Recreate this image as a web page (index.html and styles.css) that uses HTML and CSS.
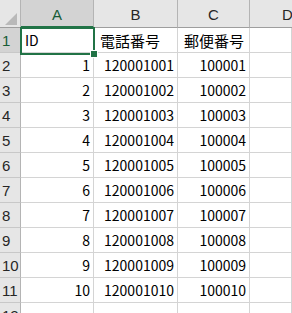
FILE: index.html
```html
<!DOCTYPE html>
<html lang="ja">
<head>
    <meta charset="UTF-8">
    <title>Sheet1</title>
    <link rel="stylesheet" href="styles.css">
</head>
<body>
    <div class="sheet">
        <!-- 列見出し -->
        <div class="corner"><svg width="20" height="27" viewBox="0 0 20 27"><polygon points="17,13 17,25 5,25" fill="#b9b9b9"/></svg></div>
        <div class="col-head sel">A</div>
        <div class="col-head">B</div>
        <div class="col-head">C</div>
        <div class="col-head last">D</div>

        <div class="row-head sel">1</div>
        <div class="cell txt">ID</div>
        <div class="cell txt jp">電話番号</div>
        <div class="cell txt jp">郵便番号</div>
        <div class="cell"></div>

        <div class="row-head">2</div>
        <div class="cell num">1</div>
        <div class="cell num">120001001</div>
        <div class="cell num">100001</div>
        <div class="cell"></div>

        <div class="row-head">3</div>
        <div class="cell num">2</div>
        <div class="cell num">120001002</div>
        <div class="cell num">100002</div>
        <div class="cell"></div>

        <div class="row-head">4</div>
        <div class="cell num">3</div>
        <div class="cell num">120001003</div>
        <div class="cell num">100003</div>
        <div class="cell"></div>

        <div class="row-head">5</div>
        <div class="cell num">4</div>
        <div class="cell num">120001004</div>
        <div class="cell num">100004</div>
        <div class="cell"></div>

        <div class="row-head">6</div>
        <div class="cell num">5</div>
        <div class="cell num">120001005</div>
        <div class="cell num">100005</div>
        <div class="cell"></div>

        <div class="row-head">7</div>
        <div class="cell num">6</div>
        <div class="cell num">120001006</div>
        <div class="cell num">100006</div>
        <div class="cell"></div>

        <div class="row-head">8</div>
        <div class="cell num">7</div>
        <div class="cell num">120001007</div>
        <div class="cell num">100007</div>
        <div class="cell"></div>

        <div class="row-head">9</div>
        <div class="cell num">8</div>
        <div class="cell num">120001008</div>
        <div class="cell num">100008</div>
        <div class="cell"></div>

        <div class="row-head">10</div>
        <div class="cell num">9</div>
        <div class="cell num">120001009</div>
        <div class="cell num">100009</div>
        <div class="cell"></div>

        <div class="row-head">11</div>
        <div class="cell num">10</div>
        <div class="cell num">120001010</div>
        <div class="cell num">100010</div>
        <div class="cell"></div>

        <div class="row-head">12</div>
        <div class="cell"></div>
        <div class="cell"></div>
        <div class="cell"></div>
        <div class="cell"></div>

        <!-- 選択セル A1 -->
        <div class="selection"><span class="handle"></span></div>
    </div>
</body>
</html>
```

FILE: styles.css
```css
body {
    margin: 0;
    padding: 0;
    background-color: white;
    font-family: "Noto Sans CJK JP", "Noto Sans", sans-serif;
    font-size: 14px;
    color: black;
    overflow: hidden;
}
.sheet {
    position: relative;
    display: grid;
    grid-template-columns: 21px 73px 84px 72px 1fr;
    grid-template-rows: 28px repeat(12, 25px);
    width: 292px;
}
.sheet > div {
    box-sizing: border-box;
    border-right: 1px solid #d4d4d4;
    border-bottom: 1px solid #d4d4d4;
    display: flex;
    align-items: center;
    white-space: nowrap;
    overflow: hidden;
}
.sheet > .corner {
    background-color: #e6e6e6;
    border-right: 1px solid #b4b4b4;
    border-bottom: 1px solid #9e9e9e;
}
.sheet > .col-head {
    background-color: #e6e6e6;
    border-right: 1px solid #b4b4b4;
    border-bottom: 1px solid #9e9e9e;
    justify-content: center;
    padding-top: 2px;
    color: #262626;
    font-family: "Liberation Sans", "Noto Sans", sans-serif;
    font-size: 15px;
}
.sheet > .col-head.last {
    justify-content: flex-start;
    padding-left: 32px;
    border-right: none;
}
.sheet > .col-head.sel {
    background-color: #d3d3d3;
    color: #185c37;
    border-bottom: 2px solid #217346;
}
.sheet > .row-head {
    background-color: #e6e6e6;
    border-right: 1px solid #b4b4b4;
    border-bottom: 1px solid #c8c8c8;
    padding-left: 2px;
    color: #262626;
    font-family: "Liberation Sans", "Noto Sans", sans-serif;
    font-size: 15px;
}
.sheet > .row-head.sel {
    background-color: #d3d3d3;
    color: #185c37;
}
.sheet > .txt {
    padding-left: 4px;
}
.sheet > .jp {
    padding-left: 6px;
    font-size: 15px;
}
.sheet > .num {
    justify-content: flex-end;
    padding-right: 3px;
}
.sheet > .selection {
    position: absolute;
    left: 20px;
    top: 27px;
    width: 75px;
    height: 28px;
    border: 2px solid #217346;
    overflow: visible;
}
.handle {
    position: absolute;
    right: -5px;
    bottom: -5px;
    width: 6px;
    height: 6px;
    background-color: #217346;
    border: 1px solid white;
}
```
